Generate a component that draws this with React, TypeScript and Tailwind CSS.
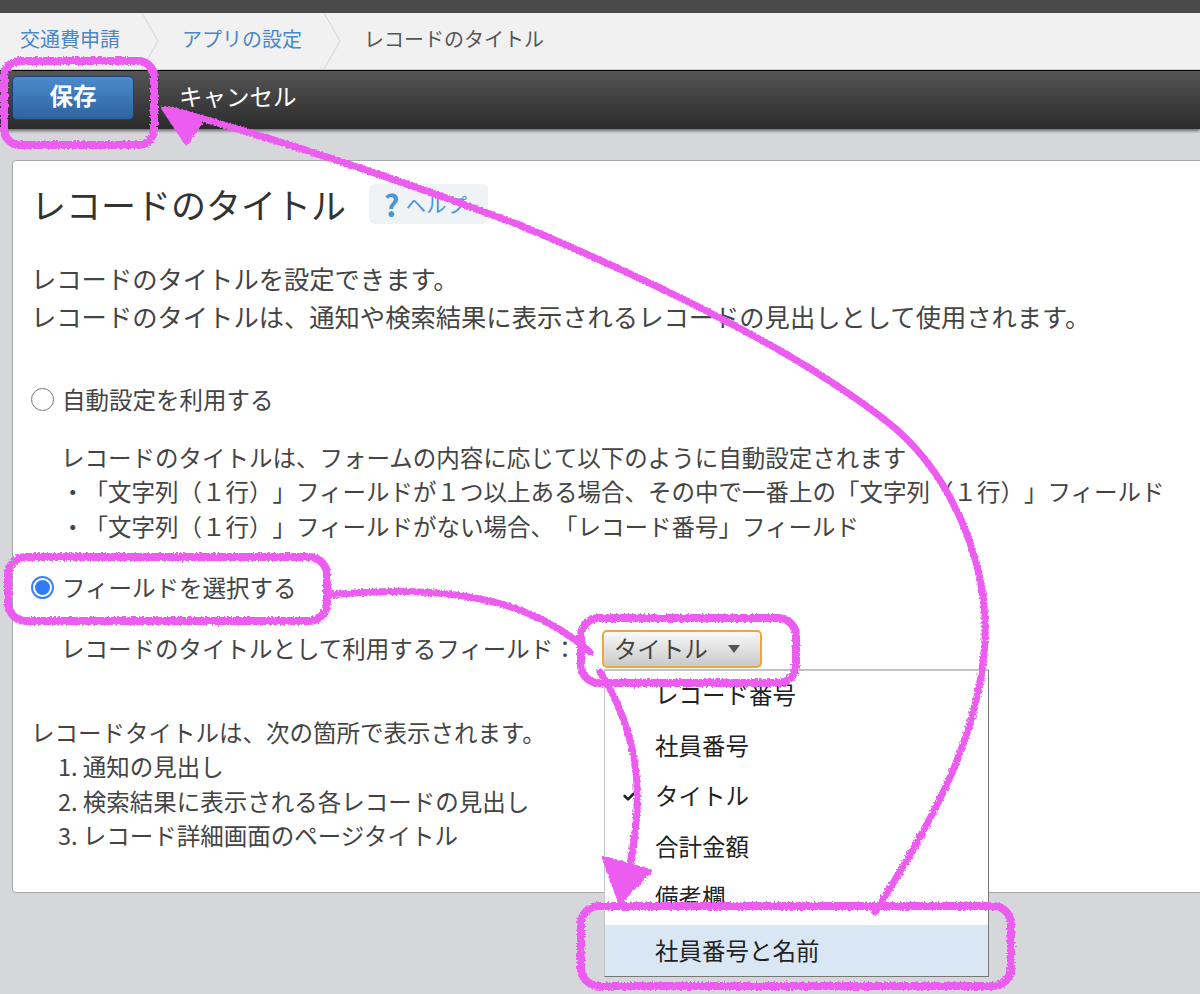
import { Check } from "lucide-react"

const font = "font-['Noto_Sans_CJK_JP','Noto_Sans_CJK_SC',sans-serif] [text-spacing-trim:space-all]"

function Chevron() {
  return (
    <svg width="22" height="56" viewBox="0 0 22 56" className="shrink-0">
      <path d="M2 0 L18 28 L2 56" fill="none" stroke="#dedede" strokeWidth="1.5" />
    </svg>
  )
}

function Breadcrumbs() {
  return (
    <nav className="flex h-14 items-center bg-[#f1f1f1] pl-5 text-[20px] leading-[30px]">
      <a className="mb-1 text-[#4a86c8]">交通費申請</a>
      <div className="ml-[20px] mr-[20px]"><Chevron /></div>
      <a className="mb-1 text-[#4a86c8]">アプリの設定</a>
      <div className="ml-[20px] mr-[20px]"><Chevron /></div>
      <span className="mb-1 text-[#555]">レコードのタイトル</span>
    </nav>
  )
}

function Toolbar() {
  return (
    <div className="mt-px flex h-[59px] items-center border-t border-black bg-gradient-to-b from-[#555555] to-[#2c2c2c] pb-[5px] pl-3 shadow-[0_2px_3px_rgba(0,0,0,0.5)]">
      <button className="flex h-[44px] w-[122px] items-center justify-center rounded-[5px] border border-[#1d3f78] bg-gradient-to-b from-[#4b8bcb] to-[#2d639f] pb-[4px] text-[23.5px] font-bold leading-none text-white">
        保存
      </button>
      <span className="mb-[2px] ml-[45px] text-[23.5px] leading-none text-white">キャンセル</span>
    </div>
  )
}

function Radio({ checked }: { checked?: boolean }) {
  if (checked) {
    return (
      <span className="flex h-[23px] w-[23px] shrink-0 items-center justify-center rounded-full border-2 border-[#3b82f6] bg-white">
        <span className="h-[15px] w-[15px] rounded-full bg-[#2f7df6]" />
      </span>
    )
  }
  return <span className="h-[23px] w-[23px] shrink-0 rounded-full border border-[#777] bg-white" />
}

function FieldMenu() {
  const items = ["レコード番号", "社員番号", "タイトル", "合計金額", "備考欄"]
  return (
    <div className="absolute left-[591px] top-[508px] z-10 w-[385px] border border-t-2 border-[#c4c4c4] border-r-[#777] border-b-[#777] bg-white text-[23.5px] leading-[34.5px] text-[#222]">
      <ul className="-mt-[2px]">
        {items.map((item) => (
          <li key={item} className="relative flex h-[50.6px] items-center pl-[50px]">
            {item === "タイトル" && (
              <Check size={16} strokeWidth={4} className="absolute left-[17px] top-[18px] text-[#222]" />
            )}
            {item}
          </li>
        ))}
      </ul>
      <div className="mt-[3px] flex h-[51px] items-center bg-[#d9e6f3] pl-[50px]">社員番号と名前</div>
    </div>
  )
}

function Annotations() {
  const pink = "#ec5cf0"
  return (
    <svg className="pointer-events-none absolute left-0 top-0 z-20" width="1200" height="994" viewBox="0 0 1200 994">
      <defs>
        <filter id="chalk" x="-5%" y="-5%" width="110%" height="110%">
          <feTurbulence type="fractalNoise" baseFrequency="0.5" numOctaves="2" seed="4" />
          <feDisplacementMap in="SourceGraphic" scale="5" />
        </filter>
      </defs>
      <g fill="none" stroke={pink} strokeWidth="8" strokeLinecap="round" strokeLinejoin="round" filter="url(#chalk)">
        <rect x="4" y="61" width="150" height="84" rx="16" />
        <rect x="8" y="557" width="319" height="64" rx="18" />
        <rect x="581" y="618" width="215" height="65" rx="18" />
        <rect x="581" y="906" width="430" height="80" rx="18" />
        <path d="M328 595 C400 588 470 590 525 612 C550 622 572 636 590 652" strokeWidth="7" />
        <path d="M600 672 C625 710 640 760 637 810 C635 845 630 870 622 900" strokeWidth="7" />
        <path d="M875 912 C940 810 980 730 985 640 C988 560 950 470 885 420 C820 370 720 310 522 226 C400 180 280 140 172 110" strokeWidth="7" />
        <path d="M604 858 L650 871 L620 902 Z" fill={pink} strokeWidth="4" />
        <path d="M163 108 L204 118 L186 143 Z" fill={pink} strokeWidth="4" />
      </g>
    </svg>
  )
}

export default function App() {
  return (
    <main className={`relative h-[994px] w-[1200px] overflow-hidden bg-[#d5d7da] ${font}`}>
      <div className="h-[13px] bg-[#4a4a4a]" />
      <Breadcrumbs />
      <Toolbar />

      <section className="relative -mr-4 ml-3 mt-[31px] h-[733px] rounded-l-[4px] border border-[#a8a8a8] bg-white pl-[18px] text-[23.5px] leading-[34.5px] text-[#444]">
        <div className="mt-[23px] flex items-center">
          <h1 className="text-[35px] font-normal leading-10 text-[#333]">レコードのタイトル</h1>
          <a className="ml-[23px] flex h-10 w-[119px] items-center rounded-md bg-[#f0f3f6] pl-[15px] text-[20.5px] text-[#4a96d8]">
            <span className="mr-[6px] text-[30px] font-bold leading-none">?</span>ヘルプ
          </a>
        </div>

        <p className="mt-[35px] text-[25.3px] leading-[38px]">
          レコードのタイトルを設定できます。
          <br />
          レコードのタイトルは、通知や検索結果に表示されるレコードの見出しとして使用されます。
        </p>

        <label className="mt-[47px] flex items-center gap-[8px]">
          <Radio />
          自動設定を利用する
        </label>
        <div className="ml-[30px] mt-[23px]">
          <p>レコードのタイトルは、フォームの内容に応じて以下のように自動設定されます</p>
          <p>・「文字列（１行）」フィールドが１つ以上ある場合、その中で一番上の「文字列（１行）」フィールド</p>
          <p>・「文字列（１行）」フィールドがない場合、「レコード番号」フィールド</p>
        </div>

        <label className="mt-[27px] flex items-center gap-[8px]">
          <Radio checked />
          フィールドを選択する
        </label>
        <div className="ml-[30px] mt-[25px] flex items-center">
          レコードのタイトルとして利用するフィールド：
          <button className="ml-[25px] flex h-[38px] w-[160px] items-center rounded-[5px] border-2 border-[#efa63c] bg-gradient-to-b from-[#fafafa] to-[#c9c9c9] pl-[10px]">
            タイトル
            <svg width="14" height="10" viewBox="0 0 14 10" className="ml-[19px]"><path d="M1 1 H13 L7 9 Z" fill="#555" /></svg>
          </button>
        </div>

        <div className="mt-[47px]">
          <p>レコードタイトルは、次の箇所で表示されます。</p>
          <ol className="ml-[27px]">
            <li>1. 通知の見出し</li>
            <li>2. 検索結果に表示される各レコードの見出し</li>
            <li>3. レコード詳細画面のページタイトル</li>
          </ol>
        </div>

        <FieldMenu />
      </section>

      <Annotations />
    </main>
  )
}
